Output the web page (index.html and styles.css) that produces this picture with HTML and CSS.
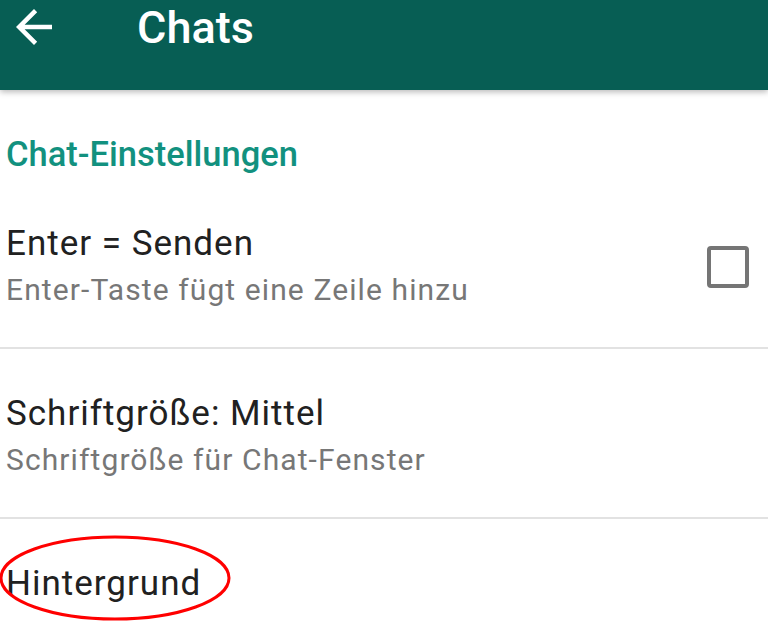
FILE: index.html
```html
<!DOCTYPE html>
<html lang="de">
<head>
<meta charset="utf-8">
<title>Chats</title>
<link rel="stylesheet" href="styles.css">
</head>
<body>
<header class="appbar">
  <svg class="back" viewBox="0 0 24 24" width="54" height="54" aria-hidden="true">
    <path d="M20 11H7.83l5.59-5.59L12 4l-8 8 8 8 1.41-1.41L7.83 13H20v-2z" fill="#fff"/>
  </svg>
  <h1 class="title">Chats</h1>
</header>
<main class="list">
  <h2 class="section">Chat-Einstellungen</h2>
  <div class="row">
    <div class="texts">
      <div class="primary">Enter = Senden</div>
      <div class="secondary">Enter-Taste fügt eine Zeile hinzu</div>
    </div>
    <span class="checkbox"></span>
  </div>
  <div class="row">
    <div class="texts">
      <div class="primary">Schriftgröße: Mittel</div>
      <div class="secondary">Schriftgröße für Chat-Fenster</div>
    </div>
  </div>
  <div class="row last">
    <div class="texts">
      <div class="primary">Hintergrund</div>
    </div>
    <svg class="mark" width="240" height="100" viewBox="0 0 240 100" aria-hidden="true">
      <ellipse cx="116" cy="49" rx="114" ry="41" fill="none" stroke="#f00" stroke-width="3"/>
    </svg>
  </div>
</main>
</body>
</html>
```
FILE: styles.css
```css
html, body {
  margin: 0;
  padding: 0;
  background: #fff;
  font-family: Roboto, "Noto Sans", "Liberation Sans", sans-serif;
  overflow: hidden;
}
.appbar {
  height: 90px;
  background: #075e54;
  display: flex;
  align-items: flex-start;
  box-shadow: 0 2px 6px rgba(0, 0, 0, 0.28);
  position: relative;
  z-index: 1;
}
.back {
  margin-left: 7px;
  flex: none;
}
.title {
  margin: 0 0 0 76px;
  font-size: 45px;
  line-height: 56px;
  font-weight: 500;
  color: #fff;
}
.list {
  display: flex;
  flex-direction: column;
}
.section {
  margin: 44px 0 0;
  padding-left: 6px;
  font-size: 34.5px;
  line-height: 40px;
  font-weight: 500;
  color: #12917f;
}
.row {
  display: flex;
  align-items: center;
  justify-content: space-between;
  padding: 50px 19px 37px 6px;
  border-bottom: 2px solid #e2e2e2;
  position: relative;
}
.row + .row {
  padding-top: 45px;
}
.row.last {
  border-bottom: none;
}
.primary {
  font-size: 35px;
  line-height: 40px;
  letter-spacing: 1px;
  color: #212121;
}
.secondary {
  margin-top: 6px;
  font-size: 30px;
  line-height: 40px;
  letter-spacing: 1.1px;
  color: #777;
}
.checkbox {
  width: 34px;
  height: 34px;
  border: 4px solid #757575;
  border-radius: 4px;
  flex: none;
}
.mark {
  position: absolute;
  left: -1px;
  top: 10px;
}
```
